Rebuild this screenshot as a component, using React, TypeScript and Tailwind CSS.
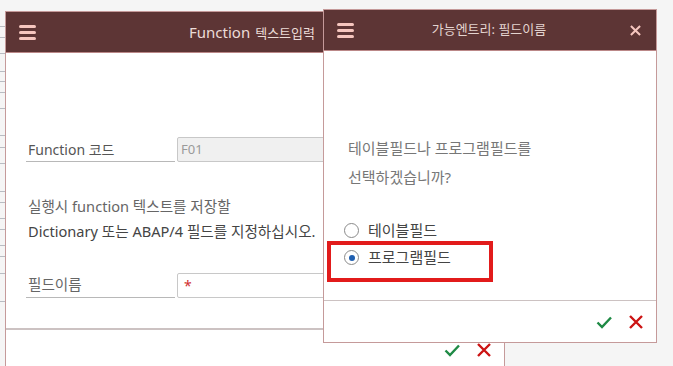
const font = { fontFamily: '"Noto Sans", "Noto Sans CJK KR", sans-serif' };

const bgLines = [26, 37, 53, 71, 81, 92, 108, 135, 147, 163, 191, 202, 218, 229, 245, 256, 273, 301];

function Hamburger() {
  return (
    <div className="flex flex-col gap-[3px] w-[17px]">
      <span className="h-[3px] rounded-full bg-[#f6c6bf]" />
      <span className="h-[3px] rounded-full bg-[#f6c6bf]" />
      <span className="h-[3px] rounded-full bg-[#f6c6bf]" />
    </div>
  );
}

function Check() {
  return (
    <svg viewBox="0 0 16 16" className="w-[16px] h-[16px]">
      <path d="M1.5 8.5l4.5 4.5L15 3.5" fill="none" stroke="#1f8a45" strokeWidth={2.4} />
    </svg>
  );
}

function Cross({ color = '#cc1414' }: { color?: string }) {
  return (
    <svg viewBox="0 0 16 16" className="w-[16px] h-[16px]">
      <path d="M2 2l12 12M14 2L2 14" fill="none" stroke={color} strokeWidth={2.4} />
    </svg>
  );
}

function Radio({ checked }: { checked?: boolean }) {
  return (
    <span className="w-[15px] h-[15px] rounded-full border border-[#8a8a8a] bg-white flex items-center justify-center">
      {checked && <span className="w-[6px] h-[6px] rounded-full bg-[#1f5fb0]" />}
    </span>
  );
}

export default function App() {
  return (
    <div className="relative w-[673px] h-[366px] overflow-hidden bg-[#f5f5f5]" style={font}>
      {/* background table rows peeking out on the left */}
      {bgLines.map((y) => (
        <div key={y} className="absolute left-0 w-[6px] h-px bg-[#b9bcc2]" style={{ top: y }} />
      ))}

      {/* main dialog */}
      <div className="absolute left-[5px] top-[11px] w-[500px] h-[370px] bg-white border border-[#c59a9a] flex flex-col">
        <div className="h-[41px] bg-[#5d3535] flex items-center pl-[13px] pr-[189px] border-b border-[#b88]">
          <Hamburger />
          <div className="ml-auto flex items-baseline gap-[5px] text-[#ecdcd8]">
            <span className="text-[15px]">Function</span>
            <span className="text-[13px]">텍스트입력</span>
          </div>
        </div>
        <div className="pl-[20px] pt-[84px] flex flex-col text-[14.6px] text-[#555]">
          <div className="flex items-end h-[25px]">
            <div className="w-[149px] h-full border-b border-[#b8b8b8] flex items-center pl-[2px] text-[14px]">Function 코드</div>
            <div className="ml-[2px] flex-1 h-full bg-[#f0f0f0] border border-[#c8c8c8] rounded-[2px] flex items-center pl-[3px] text-[13px] text-[#9a9a9a]">F01</div>
          </div>
          <div className="mt-[32px] pl-[2px] leading-[25px]">
            <div className="text-[#666]">실행시 function 텍스트를 저장할</div>
            <div className="text-[#444]">Dictionary 또는 ABAP/4 필드를 지정하십시오.</div>
          </div>
          <div className="mt-[29px] flex items-end h-[25px]">
            <div className="w-[149px] h-full border-b border-[#b8b8b8] flex items-center pl-[2px] text-[#666]">필드이름</div>
            <div className="ml-[2px] flex-1 h-full bg-white border border-[#c8c8c8] rounded-[2px] flex items-center pl-[6px] text-[14px] text-[#d03030]">*</div>
          </div>
        </div>
        <div className="mt-[30px] border-t-2 border-[#ccc2c2] h-[42px] flex items-center justify-end gap-[16px] pr-[12px]">
          <Check />
          <Cross />
        </div>
      </div>

      {/* value help popup */}
      <div className="absolute left-[323px] top-[9px] w-[334px] h-[334px] bg-white border border-[#c59a9a] flex flex-col">
        <div className="h-[41px] bg-[#5d3535] flex items-center px-[13px] border-b border-[#b88]">
          <Hamburger />
          <div className="flex-1 text-center text-[13px] text-[#e4d4d0] pr-[6px]">가능엔트리: 필드이름</div>
          <svg viewBox="0 0 12 12" className="w-[11px] h-[11px] mr-[2px]">
            <path d="M1 1l10 10M11 1L1 11" stroke="#f6c6bf" strokeWidth={2.2} />
          </svg>
        </div>
        <div className="flex flex-col pl-[24px] pt-[83px] text-[15px] text-[#777] leading-[29px]">
          <div>테이블필드나 프로그램필드를</div>
          <div>선택하겠습니까?</div>
        </div>
        <div className="relative mt-[25px] flex flex-col pl-[20px] text-[15px] text-[#444]">
          <div className="flex items-center gap-[9px] h-[27px]">
            <Radio />
            <span>테이블필드</span>
          </div>
          <div className="flex items-center gap-[9px] h-[27px]">
            <Radio checked />
            <span>프로그램필드</span>
          </div>
          <div className="absolute left-[3px] top-[24px] w-[166px] h-[41px] border-[4px] border-[#e21b1b]" />
        </div>
        <div className="mt-auto border-t border-[#ccc2c2] h-[42px] flex items-center justify-end gap-[16px] pr-[12px]">
          <Check />
          <Cross />
        </div>
      </div>
    </div>
  );
}
